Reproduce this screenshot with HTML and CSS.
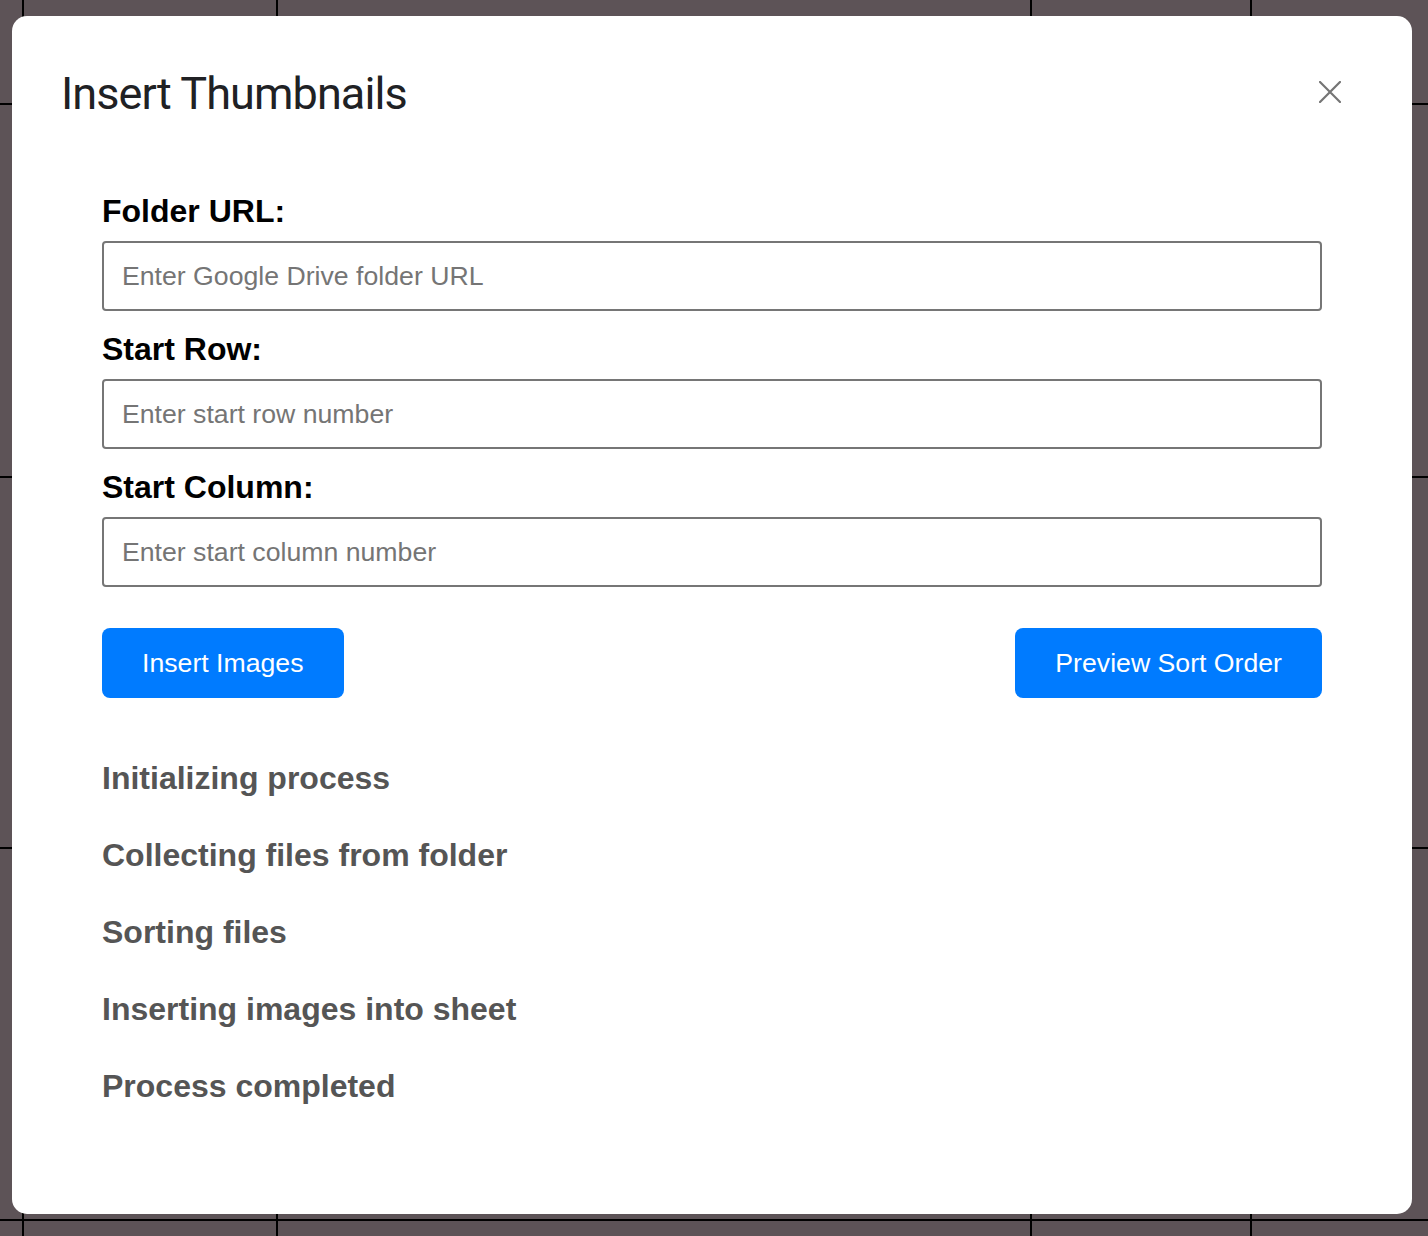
FILE: index.html
```html
<!DOCTYPE html>
<html lang="en">
<head>
<meta charset="utf-8">
<title>Insert Thumbnails</title>
<link rel="stylesheet" href="styles.css">
</head>
<body>
<div class="dialog" role="dialog" aria-labelledby="dlg-title">
  <div class="dialog-header">
    <h1 class="dialog-title" id="dlg-title">Insert Thumbnails</h1>
    <button class="close-btn" type="button" aria-label="Close">
      <svg viewBox="0 0 22 22" width="22" height="22" aria-hidden="true">
        <path d="M1 1 L21 21 M21 1 L1 21" stroke="#757575" stroke-width="2.2" stroke-linecap="square" fill="none"/>
      </svg>
    </button>
  </div>
  <div class="dialog-body">
    <div class="field">
      <label class="field-label" for="folder">Folder URL:</label>
      <input class="field-input" id="folder" type="text" placeholder="Enter Google Drive folder URL">
    </div>
    <div class="field">
      <label class="field-label" for="row">Start Row:</label>
      <input class="field-input" id="row" type="text" placeholder="Enter start row number">
    </div>
    <div class="field">
      <label class="field-label" for="col">Start Column:</label>
      <input class="field-input" id="col" type="text" placeholder="Enter start column number">
    </div>
    <div class="actions">
      <button class="btn" type="button">Insert Images</button>
      <button class="btn" type="button">Preview Sort Order</button>
    </div>
    <ul class="status-list">
      <li class="status">Initializing process</li>
      <li class="status">Collecting files from folder</li>
      <li class="status">Sorting files</li>
      <li class="status">Inserting images into sheet</li>
      <li class="status">Process completed</li>
    </ul>
  </div>
</div>
</body>
</html>
```
FILE: styles.css
```css
html {
  background-color: #5d5357;
  background-image:
    linear-gradient(#000, #000),
    linear-gradient(#000, #000),
    linear-gradient(#000, #000),
    linear-gradient(#000, #000),
    linear-gradient(#000, #000),
    linear-gradient(#000, #000),
    linear-gradient(#000, #000),
    linear-gradient(#000, #000);
  background-repeat: no-repeat;
  background-size:
    100% 2px, 100% 2px, 100% 2px, 100% 2px,
    2px 100%, 2px 100%, 2px 100%, 2px 100%;
  background-position:
    0 103px, 0 476px, 0 847px, 0 1219px,
    22px 0, 276px 0, 1030px 0, 1250px 0;
  min-height: 100%;
}

body {
  margin: 0;
  padding: 16px 0 0 12px;
  font-family: "Liberation Sans", Arial, sans-serif;
}

.dialog {
  width: 1400px;
  height: 1198px;
  box-sizing: border-box;
  background: #fff;
  border-radius: 15px;
  padding-top: 51px;
}

.dialog-header {
  display: flex;
  align-items: flex-start;
  justify-content: space-between;
  padding: 0 71px 0 49px;
}

.dialog-title {
  margin: 0;
  font-family: Roboto, "Open Sans", sans-serif;
  font-weight: 400;
  font-size: 45px;
  letter-spacing: -0.9px;
  line-height: 54px;
  color: #202124;
}

.close-btn {
  margin-top: 14px;
  width: 22px;
  height: 22px;
  padding: 0;
  border: 0;
  background: none;
  display: block;
  cursor: pointer;
}

.close-btn svg {
  display: block;
}

.dialog-body {
  padding: 72px 90px 0 90px;
}

.field {
  display: flex;
  flex-direction: column;
  margin-bottom: 20px;
}

.field-label {
  font-weight: 700;
  font-size: 32px;
  line-height: 36px;
  color: #000;
  margin-bottom: 12px;
}

.field-input {
  box-sizing: border-box;
  width: 100%;
  height: 70px;
  margin: 0;
  border: 2px solid #767676;
  border-radius: 4px;
  padding: 0 18px;
  font-family: "Liberation Sans", Arial, sans-serif;
  font-size: 26.67px;
  color: #222;
  background: #fff;
  outline: none;
}

.field-input::placeholder {
  color: #757575;
  opacity: 1;
}

.actions {
  display: flex;
  justify-content: space-between;
  margin-top: 41px;
}

.btn {
  height: 70px;
  padding: 0 40px;
  border: 0;
  border-radius: 8px;
  background: #007bff;
  color: #fff;
  font-family: "Liberation Sans", Arial, sans-serif;
  font-size: 26.67px;
  cursor: pointer;
}

.status-list {
  list-style: none;
  margin: 62px 0 0;
  padding: 0;
  display: flex;
  flex-direction: column;
  gap: 41px;
}

.status {
  font-weight: 700;
  font-size: 32px;
  line-height: 36px;
  color: #555;
}
```
